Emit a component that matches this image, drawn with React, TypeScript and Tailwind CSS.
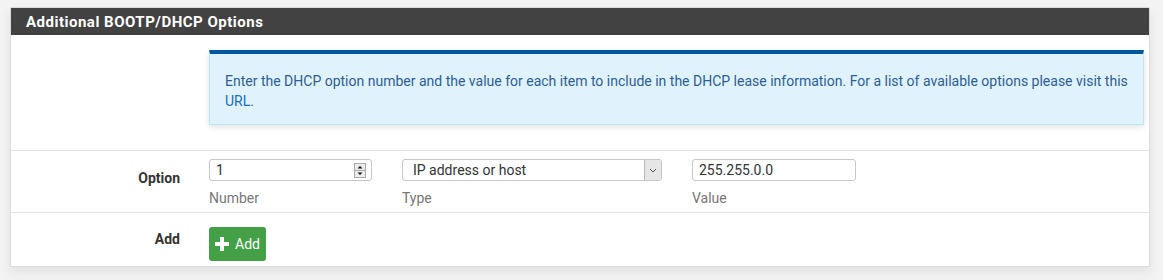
import React from "react";

export default function App() {
  return (
    <div className="w-[1163px] h-[280px] bg-[#f3f3f3] pt-[7px] pl-[10px] font-['Roboto',sans-serif]">
      <div className="w-[1140px] bg-white border border-[#dcdcdc] shadow-[0_5px_10px_rgba(0,0,0,0.08)]">
        <div className="h-[27px] bg-[#424242] pl-[15px] flex items-center pt-[1px]">
          <h2 className="text-white font-bold text-[15px] tracking-[0.5px]">Additional BOOTP/DHCP Options</h2>
        </div>
        <div className="flex h-[116px] border-b border-[#e2e2e2]">
          <div className="w-[198px]" />
          <div className="flex-1 pt-[15px] pr-[5px]">
            <div className="h-[75px] bg-[#e0f3fc] border border-[#bce8f1] border-t-[4px] border-t-[#00589c] shadow-[0_2px_6px_rgba(0,0,0,0.12)] px-[15px] pt-[17px] text-[14px] leading-[20px] text-[#2d5d96]">
              Enter the DHCP option number and the value for each item to include in the DHCP lease information. For a list of available options please visit this <a className="text-[#1c6eb9]">URL</a>.
            </div>
          </div>
        </div>
        <div className="flex h-[62px] border-b border-[#e2e2e2]">
          <div className="w-[198px] flex justify-end pr-[29px] pt-[17px]">
            <span className="font-bold text-[14px] text-[#333]">Option</span>
          </div>
          <div className="flex pt-[8px]">
            <div className="w-[163px]">
              <div className="h-[22px] border border-[#c6c6c6] rounded-[3px] flex items-center pl-[6px] pr-[5px] text-[14px] text-[#333]">
                <span className="flex-1 pt-[1px]">1</span>
                <svg width="12" height="15" viewBox="0 0 12 15">
                  <rect x="0.5" y="0.5" width="11" height="14" fill="#ececec" stroke="#a9a9a9" />
                  <line x1="0.5" y1="7.5" x2="11.5" y2="7.5" stroke="#a9a9a9" />
                  <path d="M3.5 5.5 L6 3 L8.5 5.5 Z" fill="#111" />
                  <path d="M3.5 9.5 L6 12 L8.5 9.5 Z" fill="#111" />
                </svg>
              </div>
              <div className="mt-[7px] text-[14px] text-[#777]">Number</div>
            </div>
            <div className="w-[260px] ml-[30px]">
              <div className="h-[22px] border border-[#c6c6c6] rounded-[3px] flex items-center pl-[10px] text-[14px] text-[#333] overflow-hidden">
                <span className="flex-1 pt-[1px]">IP address or host</span>
                <div className="w-[17px] h-[22px] bg-[#e6e6e6] border-l border-[#b5b5b5] flex items-center justify-center">
                  <svg width="8" height="5" viewBox="0 0 8 5"><path d="M1 1 L4 4 L7 1" fill="none" stroke="#555" strokeWidth="1" /></svg>
                </div>
              </div>
              <div className="mt-[7px] text-[14px] text-[#777]">Type</div>
            </div>
            <div className="w-[164px] ml-[30px]">
              <div className="h-[22px] border border-[#c6c6c6] rounded-[3px] flex items-center pl-[6px] pt-[1px] text-[14px] text-[#333]">255.255.0.0</div>
              <div className="mt-[7px] text-[14px] text-[#777]">Value</div>
            </div>
          </div>
        </div>
        <div className="flex h-[53px]">
          <div className="w-[198px] flex justify-end pr-[29px] pt-[16px]">
            <span className="font-bold text-[14px] text-[#333]">Add</span>
          </div>
          <div className="pt-[14px]">
            <button className="h-[34px] w-[57px] bg-[#43a047] rounded-[3px] flex items-center justify-center gap-[6px] text-white text-[14px]">
              <svg width="14" height="14" viewBox="0 0 14 14"><path d="M5 0h4v5h5v4H9v5H5V9H0V5h5z" fill="#fff" /></svg>
              <span>Add</span>
            </button>
          </div>
        </div>
      </div>
    </div>
  );
}
